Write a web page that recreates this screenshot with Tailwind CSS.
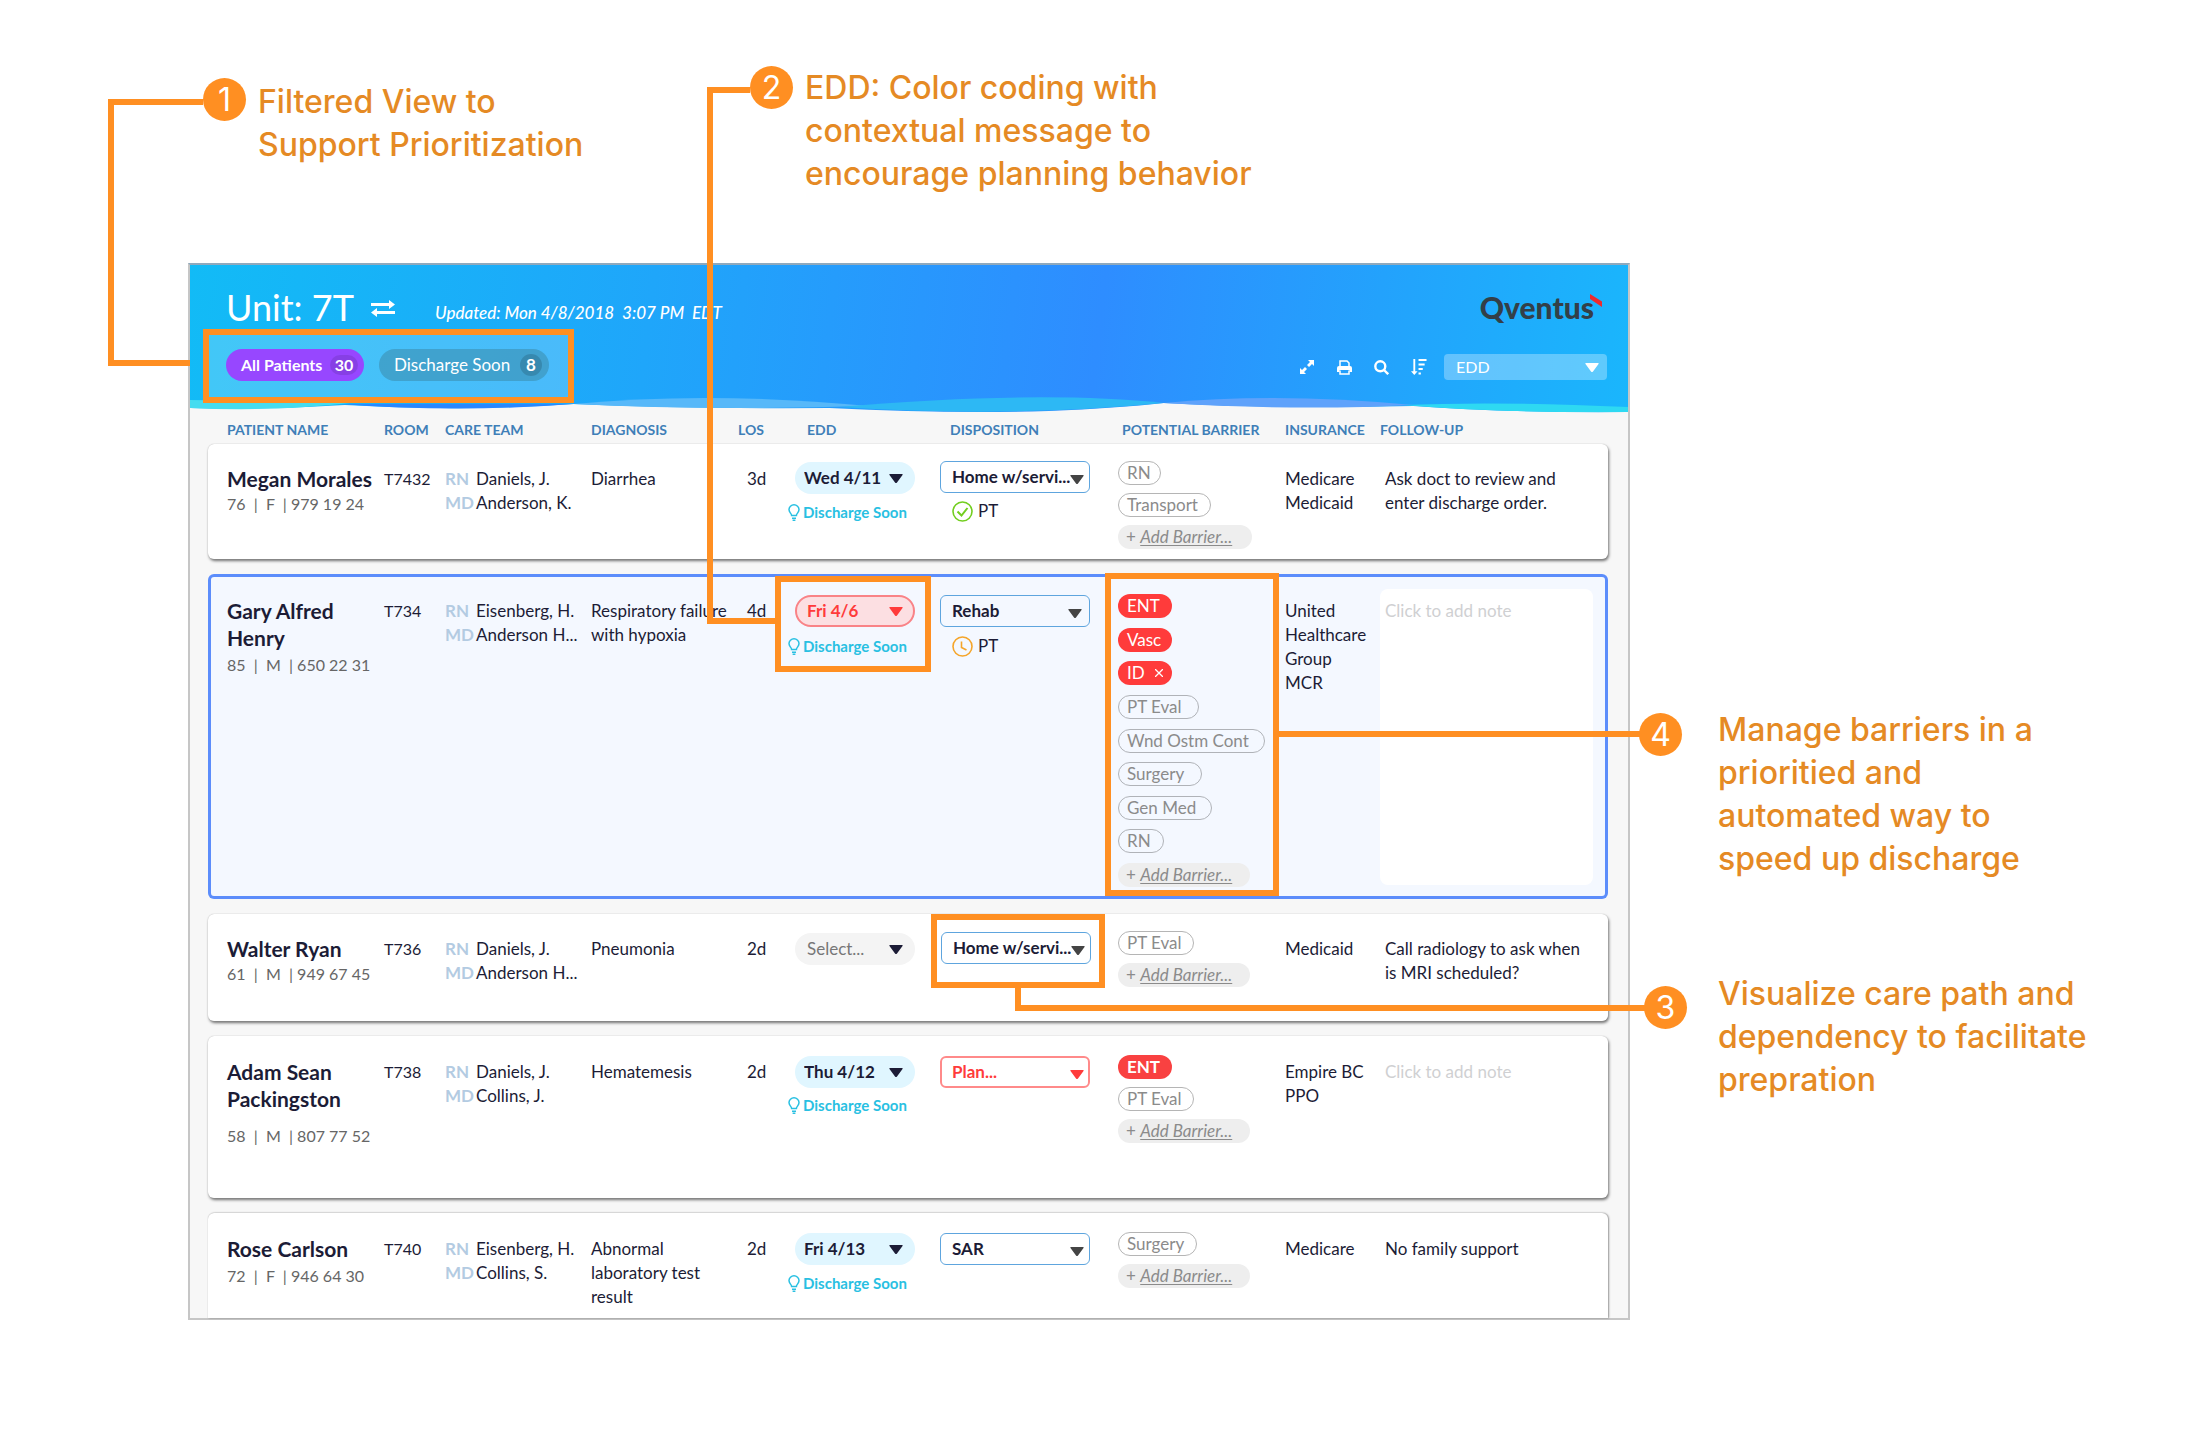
<!DOCTYPE html>
<html lang="en">
<head>
<meta charset="utf-8">
<meta name="viewport" content="width=device-width, initial-scale=1">
<title>Qventus unit board – annotated overview</title>
<script src="https://cdn.jsdelivr.net/npm/@tailwindcss/browser@4"></script>
</head>
<body class="min-h-screen bg-white font-['Lato',sans-serif] text-base leading-6 text-[#1c1c36]">

<!-- shared symbols -->
<svg class="hidden" aria-hidden="true">
  <symbol id="caret" viewBox="0 0 14 9"><path d="M1 0h12q1.300 0 .5 1L8 8.400q-1 1-2 0L.500 1Q-.300 0 1 0z" fill="currentColor"/></symbol>
  <symbol id="bulb" viewBox="0 0 12 17"><path d="M3.600 11.500C3.600 9.500 1 8.500 1 5.600a5 4.800 0 0 1 10 0c0 2.900-2.600 3.900-2.600 5.900zM4 14.200h4M4.600 16.200h2.800" fill="none" stroke="currentColor" stroke-width="1.500"/></symbol>
</svg>

<main>
  <section class="flex h-[263px] items-start pl-[203px] font-['Inter',sans-serif] text-[32px] leading-[43px] text-[#e58a24]">
    <div class="relative mt-[78px] flex w-[547px] gap-3">
      <span class="flex size-[43px] shrink-0 items-center justify-center rounded-full bg-[#ff8f22] text-white">1</span>
      <p class="pt-0.5 font-medium">Filtered View to<br>Support Prioritization</p>
      <span class="absolute top-[21px] right-full h-[267px] w-[95px] border-y-6 border-l-6 border-[#ff8f22]"></span>
    </div>
    <div class="relative mt-[66px] flex gap-3">
      <span class="flex size-[43px] shrink-0 items-center justify-center rounded-full bg-[#ff8f22] text-white">2</span>
      <p class="font-medium">EDD: Color coding with<br>contextual message to<br>encourage planning behavior</p>
      <span class="absolute top-[21px] right-full h-1.5 w-[43px] bg-[#ff8f22]"></span>
    </div>
  </section>

  <div class="flex items-start pb-[116px] pl-[188px]">
    <section class="h-[1057px] min-w-0 flex-1 border-2 border-[#c6c6c6] border-t-[#8fa9bd] bg-[#f7f7f7]">
      <header class="relative h-[149px] bg-linear-[97deg,#12bbf6_0%,#1fa6fa_32%,#2e8dff_63%,#23a2fc_82%,#1ab6fc_100%] text-white">
        <svg class="absolute bottom-0 left-0 h-5 w-full" viewBox="0 0 1440 20" preserveAspectRatio="none" aria-hidden="true">
          <path d="M0 14Q80 16 155 11Q270 18 384 10Q500 15 640 14Q760 20 860 17Q930 14 975 9Q1090 15 1225 12Q1320 19 1440 18V20H0z" fill="#f7f7f7"/>
          <path d="M0 6Q90 7 160 9Q80 18 0 14z" fill="#45dcf0"/>
          <path d="M150 10L384 10Q270 19 150 10z" fill="#2a87ff"/>
          <path d="M384 10Q520-3 680 12Q520 17 384 10z" fill="#57b8f9"/>
          <path d="M650 13Q850-4 975 9Q820 24 650 13z" fill="#2db8f4"/>
          <path d="M975 9Q1090-2 1225 11Q1110 17 975 9z" fill="#5fa2fb"/>
          <path d="M1215 11Q1310 7 1440 13V18Q1310 19 1215 11z" fill="#2ed9f2"/>
        </svg>
        <div class="flex items-start pt-5 pr-[26px] pl-9">
          <h1 class="text-[36px] leading-[44px]">Unit: 7T</h1>
          <button class="mt-[15px] ml-[17px]" aria-label="Switch unit">
            <svg class="h-[17px] w-6" viewBox="0 0 24 17" fill="currentColor"><path d="M0 3h18V0l6 4.500L18 9V6H0zM24 11H6V8l-6 4.500L6 17v-3h18z"/></svg>
          </button>
          <p class="mt-4 ml-10 text-[17px] font-medium whitespace-pre italic">Updated: Mon 4/8/2018  3:07 PM  EDT</p>
          <div class="relative ml-auto pt-0.5 pr-2 text-[30px] leading-10 font-black text-[#333f48]">Qventus
            <svg class="absolute top-[9px] right-0 h-[13px] w-3" viewBox="0 0 12 13" aria-hidden="true"><path d="M0 0l12 7.500V13L0 5z" fill="#ee2a2e"/></svg>
          </div>
        </div>
        <div class="absolute top-16 left-[13px] flex h-[74px] w-[371px] items-start gap-[15px] border-6 border-[#ff8f22] bg-white/20 pt-3.5 pl-[17px]">
          <button class="flex h-8 w-[138px] items-center gap-1 rounded-full bg-[#9747ff] pl-[15px] text-base font-bold">All Patients<span class="ml-auto mr-1.5 flex h-5 w-7 items-center justify-center rounded-full bg-black/10">30</span></button>
          <button class="flex h-8 w-[170px] items-center rounded-full bg-[#3c8fb0]/60 pl-[15px] text-[17px]">Discharge Soon<span class="ml-auto mr-[7px] flex size-[22px] items-center justify-center rounded-full bg-black/15 font-bold">8</span></button>
        </div>
        <div class="absolute top-[89px] right-[21px] flex h-[26px] items-center">
          <button class="mr-[23px]" aria-label="Expand"><svg class="size-3.5" viewBox="0 0 14 14" fill="currentColor"><path d="M8 0h6v6l-2-2-3 3-2-2 3-3zM6 14H0V8l2 2 3-3 2 2-3 3z"/></svg></button>
          <button class="mr-[22px]" aria-label="Print"><svg class="size-[15px]" viewBox="0 0 15 15"><path d="M3 7V1h7l2 2v4M3 10.500v3.500h9v-3.500" fill="none" stroke="currentColor" stroke-width="1.500"/><path d="M2 6h11q2 0 2 2v4h-2.500v-2h-10v2H0V8q0-2 2-2z" fill="currentColor"/></svg></button>
          <button class="mr-[22px]" aria-label="Search"><svg class="size-[15px]" viewBox="0 0 15 15" fill="none" stroke="currentColor" stroke-width="2.400"><circle cx="6.300" cy="6.300" r="5"/><path d="M10 10l4.200 4.200"/></svg></button>
          <button class="mr-[17px]" aria-label="Sort"><svg class="size-4" viewBox="0 0 16 17" fill="currentColor"><path d="M2 0h2v13h2.500L3 17l-3.500-4H2zM7.500 0H16v2.200H7.500zM7.500 4.800h6.500V7H7.500zM7.500 9.600h4.500v2.200H7.500zM7.500 14.400H10v2.200H7.500z"/></svg></button>
          <div class="relative">
            <select aria-label="Sort by" class="h-[26px] w-[163px] appearance-none rounded-sm bg-white/30 pl-3 leading-[26px]"><option>EDD</option></select>
            <svg class="pointer-events-none absolute top-[9px] right-2 h-[9px] w-3.5"><use href="#caret"/></svg>
          </div>
        </div>
      </header>

      <table class="block pt-[6px] pr-5 pl-[18px] text-left text-[17px] leading-6 [&_tbody]:flex [&_tbody]:flex-col [&_tbody]:gap-[15px] [&_td]:relative [&_tr]:grid [&_tr]:grid-cols-[minmax(0,157fr)_minmax(0,61fr)_minmax(0,146fr)_minmax(0,147fr)_minmax(0,49fr)_minmax(0,153fr)_minmax(0,178fr)_minmax(0,167fr)_minmax(0,95fr)_minmax(0,213fr)] [&_tr]:pr-[15px] [&_tr]:pl-[19px]">
        <thead class="block h-6 text-sm leading-5 whitespace-nowrap text-[#3f7fb8] [&_th]:font-bold">
          <tr>
            <th>PATIENT NAME</th><th>ROOM</th><th>CARE TEAM</th><th>DIAGNOSIS</th><th>LOS</th>
            <th class="pl-5">EDD</th><th class="pl-2.5">DISPOSITION</th><th class="pl-1">POTENTIAL BARRIER</th><th>INSURANCE</th><th>FOLLOW-UP</th>
          </tr>
        </thead>
        <tbody>
          <tr class="min-h-[115px] rounded-md bg-white shadow-[0_0_1px_#aaa,1px_2px_3px_rgba(0,0,0,0.55)]">
            <td class="pt-[21px]"><p class="text-[21px] leading-[27px] font-bold whitespace-nowrap">Megan Morales</p><p class="text-base whitespace-pre text-[#666]">76  |  F  | 979 19 24</p></td>
            <td class="pt-[23px] text-base">T7432</td>
            <td class="pt-[23px]"><p class="flex"><b class="w-[31px] text-[#b3cbe2]">RN</b>Daniels, J.</p><p class="flex"><b class="w-[31px] text-[#b3cbe2]">MD</b>Anderson, K.</p></td>
            <td class="pt-[23px]">Diarrhea</td>
            <td class="pt-[23px] pl-[9px]">3d</td>
            <td class="pt-[18px]">
              <div class="relative ml-2 w-[120px]"><select aria-label="EDD for Megan Morales" class="h-8 w-full appearance-none rounded-full bg-[#e0f6ff] pl-[9px] font-bold"><option>Wed 4/11</option></select><svg class="pointer-events-none absolute top-3 right-3 h-[9px] w-3.5"><use href="#caret"/></svg></div>
              <p class="mt-1.5 ml-px flex items-center gap-[3px] text-[15px] leading-6 font-bold whitespace-nowrap text-[#29c0e2]"><svg class="h-[17px] w-3"><use href="#bulb"/></svg>Discharge Soon</p>
            </td>
            <td class="pt-[17px]">
              <div class="relative w-[150px]"><select aria-label="Disposition for Megan Morales" class="h-8 w-full appearance-none rounded-md border border-[#5ea5de] bg-white pl-[11px] font-bold"><option>Home w/servi...</option></select><svg class="pointer-events-none absolute top-3.5 right-1.5 h-[9px] w-3.5 text-[#444]"><use href="#caret"/></svg></div>
              <p class="mt-1.5 ml-3 flex items-center gap-[5px]"><svg class="size-[21px]" viewBox="0 0 21 21" fill="none" stroke="#72ce1f" stroke-width="1.600"><circle cx="10.500" cy="10.500" r="9.500"/><path d="M5.500 10.500l4 4 6-7.500" stroke-width="2"/></svg>PT</p>
            </td>
            <td class="flex flex-col items-start gap-2 pt-[17px] text-[#8b8b8b]">
              <span class="h-6 w-[43px] rounded-full border border-[#b5b5b5] pl-2 leading-[22px]">RN</span>
              <span class="h-6 w-[93px] rounded-full border border-[#b5b5b5] pl-2 leading-[22px]">Transport</span>
              <button class="h-6 w-[134px] rounded-full bg-[#eee] pl-2 text-left leading-6">+ <span class="italic underline underline-offset-2">Add Barrier...</span></button>
            </td>
            <td class="pt-[23px]">Medicare<br>Medicaid</td>
            <td class="pt-[23px] pl-[5px]">Ask doct to review and<br>enter discharge order.</td>
          </tr>

          <tr class="min-h-[325px] rounded-md bg-[#f4f8ff] pt-0.5 inset-ring-3 inset-ring-[#5c8dfb]">
            <td class="pt-[21px]"><p class="text-[21px] leading-[27px] font-bold">Gary Alfred<br>Henry</p><p class="mt-0.5 text-base whitespace-pre text-[#666]">85  |  M  | 650 22 31</p></td>
            <td class="pt-[23px] text-base">T734</td>
            <td class="pt-[23px]"><p class="flex"><b class="w-[31px] text-[#b3cbe2]">RN</b>Eisenberg, H.</p><p class="flex"><b class="w-[31px] text-[#b3cbe2]">MD</b>Anderson H...</p></td>
            <td class="pt-[23px]">Respiratory failure<br>with hypoxia</td>
            <td class="pt-[23px] pl-[9px]">4d</td>
            <td class="pt-[19px]">
              <div class="relative ml-2 w-[120px]"><select aria-label="EDD for Gary Alfred Henry" class="h-8 w-full appearance-none rounded-full border-2 border-[#f98387] bg-[#fcdfe2] pl-2.5 font-bold text-[#ff3b3b]"><option>Fri 4/6</option></select><svg class="pointer-events-none absolute top-3 right-3 h-[9px] w-3.5 text-[#ff3b3b]"><use href="#caret"/></svg></div>
              <p class="mt-[7px] ml-px flex items-center gap-[3px] text-[15px] leading-6 font-bold whitespace-nowrap text-[#29c0e2]"><svg class="h-[17px] w-3"><use href="#bulb"/></svg>Discharge Soon</p>
              <span class="pointer-events-none absolute top-0 -left-3 h-24 w-[156px] border-6 border-[#ff8f22]"></span>
              <span class="pointer-events-none absolute -top-[489px] right-[165px] h-[537px] w-[68px] border-b-6 border-l-6 border-[#ff8f22]"></span>
            </td>
            <td class="pt-[19px]">
              <div class="relative w-[150px]"><select aria-label="Disposition for Gary Alfred Henry" class="h-8 w-full appearance-none rounded-md border border-[#5ea5de] bg-[#f4f8ff] pl-[11px] font-bold"><option>Rehab</option></select><svg class="pointer-events-none absolute top-3.5 right-2 h-[9px] w-3.5 text-[#444]"><use href="#caret"/></svg></div>
              <p class="mt-[7px] ml-3 flex items-center gap-[5px]"><svg class="size-[21px]" viewBox="0 0 21 21" fill="none" stroke="#f5a52a" stroke-width="1.600"><circle cx="10.500" cy="10.500" r="9.500"/><path d="M9.500 5.500v6l5 2.500"/></svg>PT</p>
            </td>
            <td class="pt-[18px]">
              <div class="flex h-[293px] flex-col items-start justify-between text-[#8b8b8b]">
                <span class="h-6 w-[54px] rounded-full bg-[#ff3b3b] pl-[9px] text-white">ENT</span>
                <span class="h-6 w-[54px] rounded-full bg-[#ff3b3b] pl-[9px] text-white">Vasc</span>
                <span class="flex h-6 w-[54px] items-center rounded-full bg-[#ff3b3b] pl-[9px] text-white">ID<button class="mr-[9px] ml-auto" aria-label="Remove ID"><svg class="size-2" viewBox="0 0 8 8" stroke="currentColor" stroke-width="1.300"><path d="M0 0l8 8M8 0L0 8"/></svg></button></span>
                <span class="h-6 w-[81px] rounded-full border border-[#b0b3b8] pl-2 leading-[22px]">PT Eval</span>
                <span class="h-6 w-[147px] rounded-full border border-[#b0b3b8] pl-2 leading-[22px]">Wnd Ostm Cont</span>
                <span class="h-6 w-[84px] rounded-full border border-[#b0b3b8] pl-2 leading-[22px]">Surgery</span>
                <span class="h-6 w-[94px] rounded-full border border-[#b0b3b8] pl-2 leading-[22px]">Gen Med</span>
                <span class="h-6 w-[46px] rounded-full border border-[#b0b3b8] pl-2 leading-[22px]">RN</span>
                <button class="h-6 w-[132px] rounded-full bg-[#eee] pl-2 text-left leading-6">+ <span class="italic underline underline-offset-2">Add Barrier...</span></button>
              </div>
              <span class="pointer-events-none absolute -top-[3px] -left-[13px] h-[323px] w-[174px] border-6 border-[#ff8f22]"></span>
              <span class="absolute top-[155px] left-[161px] z-10 h-1.5 w-[362px] bg-[#ff8f22]"></span>
            </td>
            <td class="pt-[23px]">United<br>Healthcare<br>Group<br>MCR</td>
            <td class="pt-[13px]"><textarea aria-label="Follow-up note for Gary Alfred Henry" placeholder="Click to add note" class="block h-[296px] w-full resize-none rounded-lg bg-white pt-2.5 pl-[5px] placeholder:text-[#cfd0d2]"></textarea></td>
          </tr>

          <tr class="min-h-[107px] rounded-md bg-white shadow-[0_0_1px_#aaa,1px_2px_3px_rgba(0,0,0,0.55)]">
            <td class="pt-[21px]"><p class="text-[21px] leading-[27px] font-bold">Walter Ryan</p><p class="text-base whitespace-pre text-[#666]">61  |  M  | 949 67 45</p></td>
            <td class="pt-[23px] text-base">T736</td>
            <td class="pt-[23px]"><p class="flex"><b class="w-[31px] text-[#b3cbe2]">RN</b>Daniels, J.</p><p class="flex"><b class="w-[31px] text-[#b3cbe2]">MD</b>Anderson H...</p></td>
            <td class="pt-[23px]">Pneumonia</td>
            <td class="pt-[23px] pl-[9px]">2d</td>
            <td class="pt-[19px]">
              <div class="relative ml-2 w-[120px]"><select aria-label="EDD for Walter Ryan" class="h-8 w-full appearance-none rounded-full bg-[#f4f4f4] pl-3 text-[#777]"><option>Select...</option></select><svg class="pointer-events-none absolute top-3 right-3 h-[9px] w-3.5"><use href="#caret"/></svg></div>
            </td>
            <td class="pt-[18px]">
              <div class="relative ml-px w-[150px]"><select aria-label="Disposition for Walter Ryan" class="h-8 w-full appearance-none rounded-md border border-[#5ea5de] bg-white pl-[11px] font-bold"><option>Home w/servi...</option></select><svg class="pointer-events-none absolute top-3.5 right-1.5 h-[9px] w-3.5 text-[#444]"><use href="#caret"/></svg></div>
              <span class="pointer-events-none absolute top-0 -left-[9px] h-[74px] w-[174px] border-6 border-[#ff8f22]"></span>
              <span class="pointer-events-none absolute top-[73px] left-[75px] z-10 h-6 w-[630px] border-b-6 border-l-6 border-[#ff8f22]"></span>
            </td>
            <td class="flex flex-col items-start gap-2 pt-[17px] text-[#8b8b8b]">
              <span class="h-6 w-[76px] rounded-full border border-[#b5b5b5] pl-2 leading-[22px]">PT Eval</span>
              <button class="h-6 w-[132px] rounded-full bg-[#eee] pl-2 text-left leading-6">+ <span class="italic underline underline-offset-2">Add Barrier...</span></button>
            </td>
            <td class="pt-[23px]">Medicaid</td>
            <td class="pt-[23px] pl-[5px]">Call radiology to ask when<br>is MRI scheduled?</td>
          </tr>

          <tr class="min-h-[162px] rounded-md bg-white pt-px shadow-[0_0_1px_#aaa,1px_2px_3px_rgba(0,0,0,0.55)]">
            <td class="pt-[21px]"><p class="text-[21px] leading-[27px] font-bold">Adam Sean<br>Packingston</p><p class="mt-3 text-base whitespace-pre text-[#666]">58  |  M  | 807 77 52</p></td>
            <td class="pt-[23px] text-base">T738</td>
            <td class="pt-[23px]"><p class="flex"><b class="w-[31px] text-[#b3cbe2]">RN</b>Daniels, J.</p><p class="flex"><b class="w-[31px] text-[#b3cbe2]">MD</b>Collins, J.</p></td>
            <td class="pt-[23px]">Hematemesis</td>
            <td class="pt-[23px] pl-[9px]">2d</td>
            <td class="pt-[19px]">
              <div class="relative ml-2 w-[120px]"><select aria-label="EDD for Adam Sean Packingston" class="h-8 w-full appearance-none rounded-full bg-[#e0f6ff] pl-[9px] font-bold"><option>Thu 4/12</option></select><svg class="pointer-events-none absolute top-3 right-3 h-[9px] w-3.5"><use href="#caret"/></svg></div>
              <p class="mt-[5px] ml-px flex items-center gap-[3px] text-[15px] leading-6 font-bold whitespace-nowrap text-[#29c0e2]"><svg class="h-[17px] w-3"><use href="#bulb"/></svg>Discharge Soon</p>
            </td>
            <td class="pt-[19px]">
              <div class="relative w-[150px]"><select aria-label="Disposition for Adam Sean Packingston" class="h-8 w-full appearance-none rounded-md border-2 border-[#ff8a8a] bg-white pl-2.5 font-bold text-[#ff3b3b]"><option>Plan...</option></select><svg class="pointer-events-none absolute top-3.5 right-1.5 h-[9px] w-3.5 text-[#ff3b3b]"><use href="#caret"/></svg></div>
            </td>
            <td class="flex flex-col items-start gap-2 pt-[18px] text-[#8b8b8b]">
              <span class="h-6 w-[54px] rounded-full bg-[#f94141] pl-[9px] font-bold text-white">ENT</span>
              <span class="h-6 w-[76px] rounded-full border border-[#b5b5b5] pl-2 leading-[22px]">PT Eval</span>
              <button class="h-6 w-[132px] rounded-full bg-[#eee] pl-2 text-left leading-6">+ <span class="italic underline underline-offset-2">Add Barrier...</span></button>
            </td>
            <td class="pt-[23px] whitespace-nowrap">Empire BC<br>PPO</td>
            <td class="pt-[23px]"><textarea aria-label="Follow-up note for Adam Sean Packingston" placeholder="Click to add note" class="block h-24 w-full resize-none pl-[5px] placeholder:text-[#cfd0d2]"></textarea></td>
          </tr>

          <tr class="h-[105px] rounded-t-md bg-white pt-px shadow-[0_0_1px_#aaa,1px_0_2px_rgba(0,0,0,0.4)]">
            <td class="pt-[21px]"><p class="text-[21px] leading-[27px] font-bold">Rose Carlson</p><p class="mt-0.5 text-base whitespace-pre text-[#666]">72  |  F  | 946 64 30</p></td>
            <td class="pt-[23px] text-base">T740</td>
            <td class="pt-[23px]"><p class="flex"><b class="w-[31px] text-[#b3cbe2]">RN</b>Eisenberg, H.</p><p class="flex"><b class="w-[31px] text-[#b3cbe2]">MD</b>Collins, S.</p></td>
            <td class="pt-[23px]">Abnormal<br>laboratory test<br>result</td>
            <td class="pt-[23px] pl-[9px]">2d</td>
            <td class="pt-[19px]">
              <div class="relative ml-2 w-[120px]"><select aria-label="EDD for Rose Carlson" class="h-8 w-full appearance-none rounded-full bg-[#e0f6ff] pl-[9px] font-bold"><option>Fri 4/13</option></select><svg class="pointer-events-none absolute top-3 right-3 h-[9px] w-3.5"><use href="#caret"/></svg></div>
              <p class="mt-1.5 ml-px flex items-center gap-[3px] text-[15px] leading-6 font-bold whitespace-nowrap text-[#29c0e2]"><svg class="h-[17px] w-3"><use href="#bulb"/></svg>Discharge Soon</p>
            </td>
            <td class="pt-[19px]">
              <div class="relative w-[150px]"><select aria-label="Disposition for Rose Carlson" class="h-8 w-full appearance-none rounded-md border border-[#5ea5de] bg-white pl-[11px] font-bold"><option>SAR</option></select><svg class="pointer-events-none absolute top-3.5 right-1.5 h-[9px] w-3.5 text-[#444]"><use href="#caret"/></svg></div>
            </td>
            <td class="flex flex-col items-start gap-2 pt-[18px] text-[#8b8b8b]">
              <span class="h-6 w-[79px] rounded-full border border-[#b5b5b5] pl-2 leading-[22px]">Surgery</span>
              <button class="h-6 w-[132px] rounded-full bg-[#eee] pl-2 text-left leading-6">+ <span class="italic underline underline-offset-2">Add Barrier...</span></button>
            </td>
            <td class="pt-[23px]">Medicare</td>
            <td class="pt-[23px] pl-[5px]">No family support</td>
          </tr>
        </tbody>
      </table>
    </section>

    <aside class="w-[570px] shrink-0 pt-[445px] font-['Inter',sans-serif] text-[32px] leading-[43px] text-[#e58a24]">
      <div class="flex items-start gap-9 pl-[9px]">
        <span class="mt-[5px] flex size-[43px] shrink-0 items-center justify-center rounded-full bg-[#ff8f22] text-white">4</span>
        <p class="font-medium">Manage barriers in a<br>prioritied and<br>automated way to<br>speed up discharge</p>
      </div>
      <div class="mt-[92px] flex items-start gap-[31px] pl-3.5">
        <span class="mt-3.5 flex size-[43px] shrink-0 items-center justify-center rounded-full bg-[#ff8f22] text-white">3</span>
        <p class="font-medium">Visualize care path and<br>dependency to facilitate<br>prepration</p>
      </div>
    </aside>
  </div>
</main>
</body>
</html>
